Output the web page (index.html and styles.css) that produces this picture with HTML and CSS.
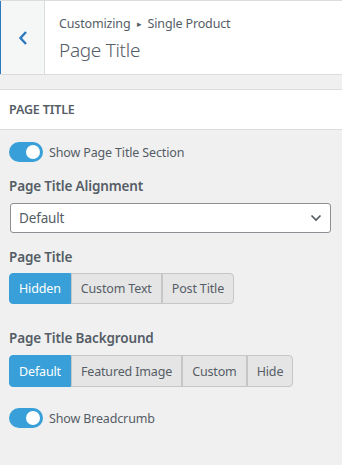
FILE: index.html
```html
<!DOCTYPE html>
<html lang="en">

<head>
    <meta charset="UTF-8">
    <title>Page Title</title>
    <meta name="viewport" content="width=device-width, initial-scale=1.0">
    <link rel="stylesheet" href="styles.css">
</head>

<body>

    <div class="header">
        <button class="back" aria-label="Back">
            <svg width="10" height="14" viewBox="0 0 10 14">
                <path d="M8 1 L2.5 7 L8 13" fill="none" stroke="#2c79bd" stroke-width="2.4" />
            </svg>
        </button>
        <div class="header-title">
            <div class="crumb">Customizing <span class="arrow">&#9656;</span> Single Product</div>
            <div class="title">Page Title</div>
        </div>
    </div>

    <div class="section-title">Page Title</div>

    <div class="controls">
        <label class="toggle-row first">
            <span class="toggle"><span class="knob"></span></span>
            Show Page Title Section
        </label>

        <div class="label label-align">Page Title Alignment</div>
        <div class="select">
            <span>Default</span>
            <svg width="12" height="8" viewBox="0 0 12 8">
                <path d="M1.5 1.5 L6 6 L10.5 1.5" fill="none" stroke="#50575e" stroke-width="1.6" />
            </svg>
        </div>

        <div class="label label-title">Page Title</div>
        <div class="btn-group group-title">
            <button class="active">Hidden</button>
            <button>Custom Text</button>
            <button>Post Title</button>
        </div>

        <div class="label label-bg">Page Title Background</div>
        <div class="btn-group group-bg">
            <button class="active">Default</button>
            <button>Featured Image</button>
            <button>Custom</button>
            <button>Hide</button>
        </div>

        <label class="toggle-row last">
            <span class="toggle"><span class="knob"></span></span>
            Show Breadcrumb
        </label>
    </div>

</body>

</html>
```

FILE: styles.css
```css
body {
    margin: 0;
    background: #f0f0f0;
    color: #555d66;
    font-family: "Noto Sans", "Open Sans", sans-serif;
    font-size: 12.5px;
    letter-spacing: -0.15px;
}

.header {
    display: flex;
    height: 73px;
    background: #fff;
    border-top: 1px solid #dcdcde;
    border-bottom: 1px solid #dcdcde;
}

.back {
    width: 45px;
    padding: 0;
    background: #f5f6f6;
    border: none;
    border-left: 1px solid #2c79bd;
    border-right: 1px solid #dcdcde;
    display: flex;
    align-items: center;
    justify-content: center;
}

.header-title {
    padding: 13px 0 0 14px;
}

.crumb {
    font-size: 12.5px;
    line-height: 20px;
}

.arrow {
    font-size: 9px;
    margin: 0 3px;
    position: relative;
    top: -1px;
}

.title {
    font-size: 19px;
    font-weight: 300;
    letter-spacing: -0.3px;
    line-height: 28px;
    margin-top: 1px;
}

.section-title {
    margin-top: 14px;
    height: 39px;
    line-height: 39px;
    background: #fff;
    border-top: 1px solid #dcdcde;
    border-bottom: 1px solid #dcdcde;
    padding-left: 9px;
    font-size: 12.5px;
    font-weight: 600;
    text-transform: uppercase;
}

.controls {
    padding: 12px 11px 0 9px;
}

.toggle-row {
    display: flex;
    align-items: center;
    gap: 6px;
    height: 20px;
}

.toggle {
    width: 34px;
    height: 20px;
    border-radius: 10px;
    background: #389fd8;
    display: flex;
    align-items: center;
    justify-content: flex-end;
    padding-right: 3px;
    box-sizing: border-box;
}

.knob {
    width: 14px;
    height: 14px;
    border-radius: 50%;
    background: #fff;
}

.label {
    font-size: 13.5px;
    font-weight: 600;
    line-height: 20px;
}

.label-align {
    margin-top: 14px;
}

.label-title {
    margin-top: 14px;
}

.label-bg {
    margin-top: 24px;
}

.select {
    margin: 7px 0 0 1px;
    height: 30px;
    box-sizing: border-box;
    background: #fff;
    border: 1px solid #8c8f94;
    border-radius: 3px;
    display: flex;
    align-items: center;
    justify-content: space-between;
    padding: 0 8px 0 8px;
    font-size: 13.5px;
}

.btn-group {
    display: flex;
    margin-top: 6px;
}

.group-title button {
    height: 31px;
    padding: 0 9.5px;
}

.group-bg {
    margin-top: 7px;
}

.group-bg button {
    height: 32px;
}

.btn-group button {
    font-family: inherit;
    font-size: 12.5px;
    letter-spacing: -0.15px;
    color: #555d66;
    background: #e5e5e5;
    border: 1px solid #c6c6c6;
    padding: 0 9px;
}

.btn-group button:first-child {
    border-radius: 4px 0 0 4px;
}

.btn-group button:last-child {
    border-radius: 0 4px 4px 0;
}

.btn-group button.active {
    background: #389fd8;
    border-color: #389fd8;
    color: #fff;
}

.toggle-row.last {
    margin-top: 21px;
}
```
